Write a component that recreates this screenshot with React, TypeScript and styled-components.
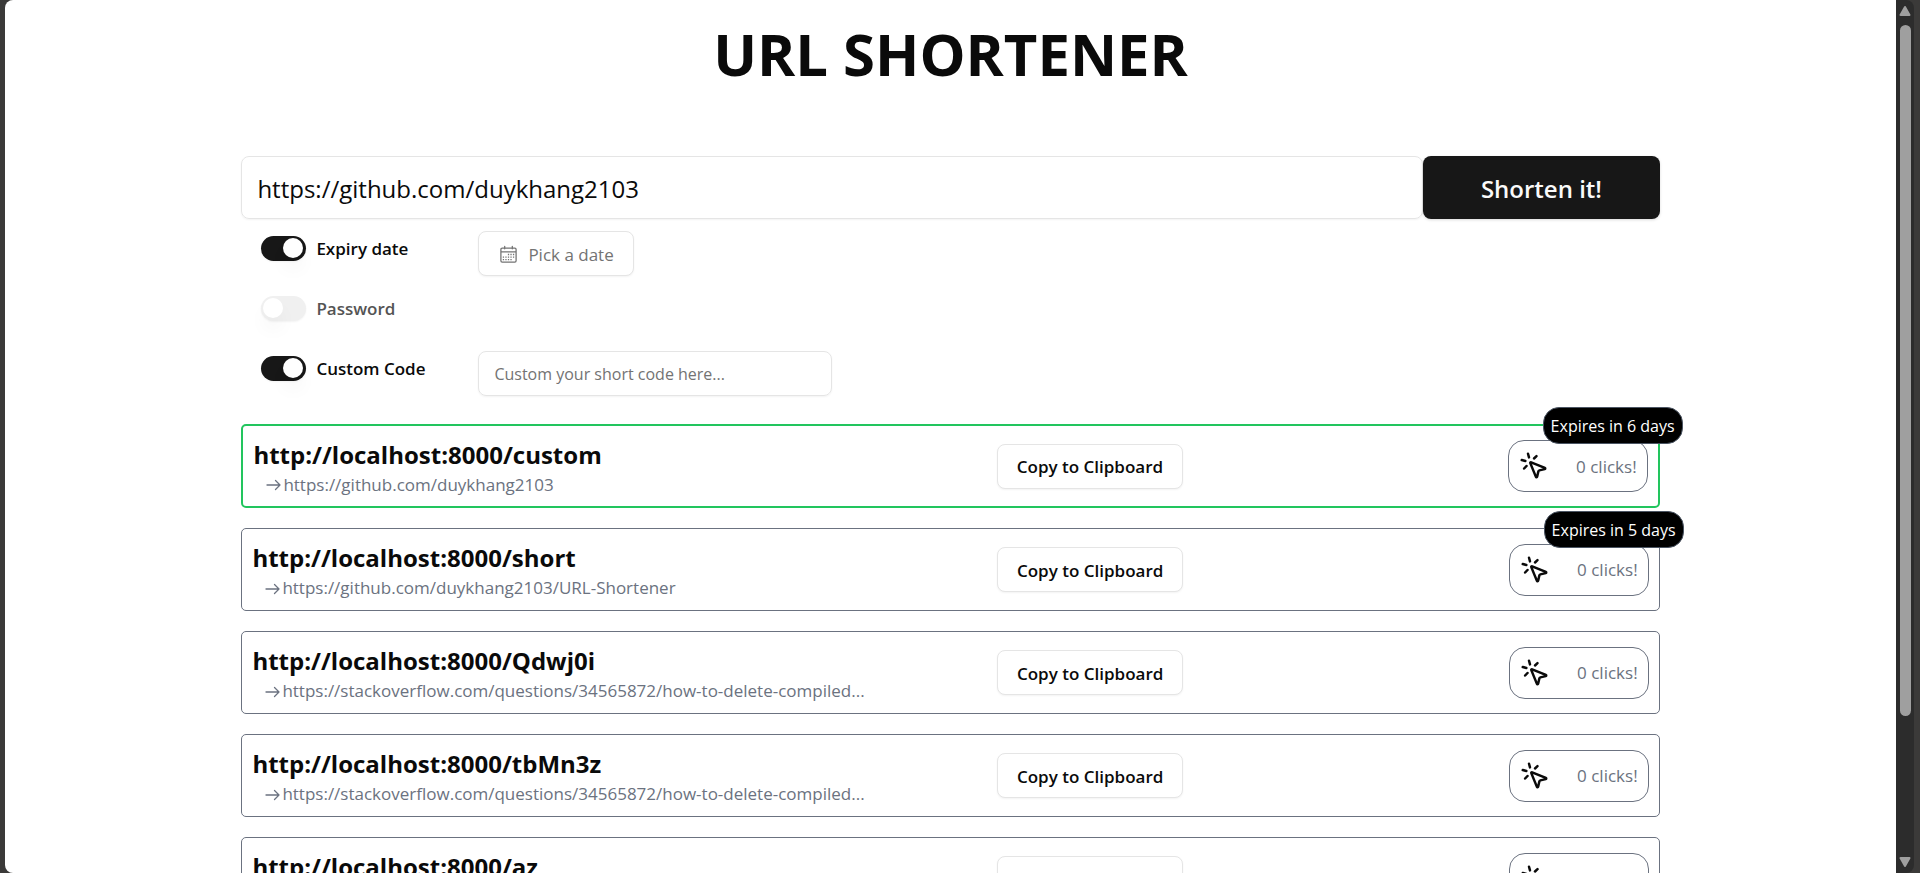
import React, { useState } from "react";
import styled, { createGlobalStyle } from "styled-components";
import { MousePointerClick } from "lucide-react";

const GlobalStyle = createGlobalStyle`
  *, *::before, *::after { box-sizing: border-box; }
  body {
    margin: 0;
    background: #3b3a39;
    color: #0a0a0a;
    font-family: "Open Sans", "Noto Sans", sans-serif;
    font-size: 17px;
    line-height: 25px;
  }
  button, input { font: inherit; color: inherit; }
  h1, h2, p, ul { margin: 0; padding: 0; }
`;

const Frame = styled.div`
  display: flex;
  height: 100vh;
  padding: 0 6px 0 5px;
  overflow: hidden;
`;

const Page = styled.main`
  flex: 1;
  min-width: 0;
  overflow: hidden;
  background: #fff;
  border-radius: 8px 0 0 8px;
`;

const Content = styled.div`
  width: 75%;
  margin: 0 auto;
`;

const Title = styled.h1`
  padding: 18px 0 66px;
  font-size: 58px;
  line-height: 72px;
  font-weight: 700;
  text-align: center;
`;

const ShortenForm = styled.form`
  display: grid;
  grid-template-columns: 5fr 1fr;
`;

const TextField = styled.input`
  width: 100%;
  height: 45px;
  padding: 1px 15px 0;
  border: 1px solid #e5e5e5;
  border-radius: 8px;
  background: transparent;
  box-shadow: 0 1px 2px rgba(0, 0, 0, 0.05);
  font-size: 16px;
  outline: none;
  &::placeholder { color: #737373; opacity: 1; }
`;

const UrlField = styled(TextField)`
  height: 63px;
  font-size: 24px;
`;

const SubmitButton = styled.button`
  padding: 2px 0 0;
  border: 0;
  border-radius: 8px;
  background: #171717;
  color: #fafafa;
  font-size: 24px;
  font-weight: 600;
  box-shadow: 0 1px 3px rgba(0, 0, 0, 0.15);
  cursor: pointer;
`;

const Options = styled.div`
  padding: 12px 20px 13px;
`;

const OptionRow = styled.div`
  display: grid;
  grid-template-columns: 217px minmax(0, 354px);
  align-items: start;
  height: 60px;
`;

const OptionLabel = styled.label<{ $dimmed: boolean }>`
  display: flex;
  align-items: center;
  gap: 10px;
  padding-top: 5px;
  font-weight: 600;
  color: ${(p) => (p.$dimmed ? "#545454" : "#0a0a0a")};
`;

const Toggle = styled.input`
  appearance: none;
  flex: none;
  width: 45px;
  height: 25px;
  margin: 0;
  padding: 2px 3px 2px 2px;
  display: flex;
  border-radius: 13px;
  background: #f0f0f0;
  box-shadow: 0 1px 2px rgba(0, 0, 0, 0.05);
  cursor: pointer;
  &::before {
    content: "";
    width: 20px;
    height: 20px;
    border-radius: 50%;
    background: #fff;
    box-shadow: 0 12px 19px -4px rgba(0, 0, 0, 0.1);
  }
  &:checked {
    justify-content: flex-end;
    background: #171717;
  }
`;

const OutlineButton = styled.button<{ $muted?: boolean }>`
  display: inline-flex;
  align-items: center;
  justify-content: center;
  justify-self: start;
  gap: 10px;
  height: 45px;
  padding: 1px 19px 0 20px;
  border: 1px solid #e5e5e5;
  border-radius: 8px;
  background: #fff;
  color: ${(p) => (p.$muted ? "#737373" : "#0a0a0a")};
  font-weight: ${(p) => (p.$muted ? 400 : 600)};
  box-shadow: 0 1px 2px rgba(0, 0, 0, 0.05);
  white-space: nowrap;
  cursor: pointer;
`;

const CopyButton = styled(OutlineButton)`
  justify-self: stretch;
  padding: 1px 0 0;
`;

const LinkList = styled.ul`
  display: flex;
  flex-direction: column;
  gap: 20px;
  list-style: none;
`;

const Card = styled.li<{ $fresh: boolean }>`
  display: grid;
  grid-template-columns: minmax(0, 8fr) 186px minmax(0, 5fr);
  align-items: center;
  height: ${(p) => (p.$fresh ? 84 : 83)}px;
  padding: 0 10px;
  border: ${(p) => (p.$fresh ? "2px solid #22c55e" : "1px solid #6b7280")};
  border-radius: 5px;
`;

const ShortUrl = styled.h2`
  padding-top: 2px;
  font-size: 24px;
  line-height: 34px;
  font-weight: 700;
`;

const LongUrl = styled.p`
  display: flex;
  align-items: center;
  gap: 2px;
  padding-left: 13px;
  color: #6b7280;
  svg { flex: none; }
`;

const PlainLink = styled.a`
  overflow: hidden;
  white-space: nowrap;
  text-overflow: ellipsis;
  color: inherit;
  text-decoration: none;
`;

const Clicks = styled.div`
  display: flex;
  align-items: center;
  justify-content: space-between;
  justify-self: end;
  position: relative;
  width: 140px;
  height: 52px;
  padding: 0 10px;
  border: 1px solid #6b7280;
  border-radius: 16px;
  color: #6b7280;
  svg { color: #0a0a0a; }
`;

const Expiry = styled.span`
  position: absolute;
  top: -34px;
  right: -36px;
  width: 140px;
  padding: 6px 0 4px;
  border: 1px solid #4b5563;
  border-radius: 16px;
  background: #000;
  color: #fff;
  font-size: 16px;
  text-align: center;
  white-space: nowrap;
`;

const ScrollTrack = styled.div`
  display: flex;
  flex-direction: column;
  align-items: center;
  width: 18px;
  padding: 6px 0;
  background: #2c2c2c;
  border-radius: 0 8px 8px 0;
`;

const ScrollArea = styled.div`
  flex: 1;
  padding: 9px 0;
`;

const ScrollThumb = styled.div`
  width: 11px;
  height: 84%;
  border-radius: 6px;
  background: #9f9f9f;
`;

const CalendarIcon = () => (
  <svg width="19" height="19" viewBox="0 0 15 15" fill="none" aria-hidden="true">
    <path
      d="M4.5 1v2M10.5 1v2M1.5 5.5h12M2.5 2.5h10a1 1 0 0 1 1 1v9a1 1 0 0 1-1 1h-10a1 1 0 0 1-1-1v-9a1 1 0 0 1 1-1z"
      stroke="currentColor"
      strokeLinecap="round"
    />
    <path
      d="M7 7.5h1M9 7.5h1M11 7.5h1M3 9.5h1M5 9.5h1M7 9.5h1M9 9.5h1M11 9.5h1M3 11.5h1M5 11.5h1M7 11.5h1M9 11.5h1"
      stroke="currentColor"
    />
  </svg>
);

const ArrowIcon = () => (
  <svg width="15" height="16" viewBox="0 0 15 16" fill="none" aria-hidden="true">
    <path
      d="M1 9h13M9.5 4.5L14 9l-4.5 4.5"
      stroke="currentColor"
      strokeWidth="1.3"
      strokeLinecap="round"
      strokeLinejoin="round"
    />
  </svg>
);

const ScrollArrow = ({ down }: { down?: boolean }) => (
  <svg width="12" height="10" viewBox="0 0 12 10" aria-hidden="true">
    <path
      d={down ? "M1.5 1h9L6 9z" : "M1.5 9h9L6 1z"}
      fill="#9f9f9f"
      stroke="#9f9f9f"
      strokeWidth="2"
      strokeLinejoin="round"
    />
  </svg>
);

interface ShortLink {
  code: string;
  target: string;
  label?: string;
  expires?: string;
}

const compiled = "https://stackoverflow.com/questions/34565872/how-to-delete-compiled";

const links: ShortLink[] = [
  { code: "custom", target: "https://github.com/duykhang2103", expires: "Expires in 6 days" },
  { code: "short", target: "https://github.com/duykhang2103/URL-Shortener", expires: "Expires in 5 days" },
  { code: "Qdwj0i", target: compiled, label: compiled + "..." },
  { code: "tbMn3z", target: compiled, label: compiled + "..." },
  { code: "az", target: "https://github.com/duykhang2103" },
];

const LinkCard = ({ link, fresh }: { link: ShortLink; fresh: boolean }) => {
  const short = `http://localhost:8000/${link.code}`;
  return (
    <Card $fresh={fresh}>
      <div>
        <ShortUrl>
          <PlainLink href={short}>{short}</PlainLink>
        </ShortUrl>
        <LongUrl>
          <ArrowIcon />
          <PlainLink href={link.target}>{link.label ?? link.target}</PlainLink>
        </LongUrl>
      </div>
      <CopyButton type="button">Copy to Clipboard</CopyButton>
      <Clicks>
        <MousePointerClick size={30} aria-hidden="true" />
        0 clicks!
        {link.expires && <Expiry>{link.expires}</Expiry>}
      </Clicks>
    </Card>
  );
};

export default function App() {
  const [url, setUrl] = useState("https://github.com/duykhang2103");
  const [code, setCode] = useState("");
  const [expiry, setExpiry] = useState(true);
  const [password, setPassword] = useState(false);
  const [custom, setCustom] = useState(true);

  return (
    <>
      <GlobalStyle />
      <Frame>
        <Page>
          <Content>
            <Title>URL SHORTENER</Title>
            <ShortenForm onSubmit={(e) => e.preventDefault()}>
              <UrlField aria-label="URL to shorten" value={url} onChange={(e) => setUrl(e.target.value)} />
              <SubmitButton type="submit">Shorten it!</SubmitButton>
            </ShortenForm>
            <Options>
              <OptionRow>
                <OptionLabel $dimmed={!expiry}>
                  <Toggle type="checkbox" role="switch" checked={expiry} onChange={() => setExpiry(!expiry)} />
                  Expiry date
                </OptionLabel>
                {expiry && (
                  <OutlineButton type="button" $muted>
                    <CalendarIcon />
                    Pick a date
                  </OutlineButton>
                )}
              </OptionRow>
              <OptionRow>
                <OptionLabel $dimmed={!password}>
                  <Toggle type="checkbox" role="switch" checked={password} onChange={() => setPassword(!password)} />
                  Password
                </OptionLabel>
                {password && <TextField type="password" aria-label="Link password" />}
              </OptionRow>
              <OptionRow>
                <OptionLabel $dimmed={!custom}>
                  <Toggle type="checkbox" role="switch" checked={custom} onChange={() => setCustom(!custom)} />
                  Custom Code
                </OptionLabel>
                {custom && (
                  <TextField
                    aria-label="Short code"
                    placeholder="Custom your short code here..."
                    value={code}
                    onChange={(e) => setCode(e.target.value)}
                  />
                )}
              </OptionRow>
            </Options>
            <LinkList>
              {links.map((link, i) => (
                <LinkCard key={link.code} link={link} fresh={i === 0} />
              ))}
            </LinkList>
          </Content>
        </Page>
        <ScrollTrack aria-hidden="true">
          <ScrollArrow />
          <ScrollArea>
            <ScrollThumb />
          </ScrollArea>
          <ScrollArrow down />
        </ScrollTrack>
      </Frame>
    </>
  );
}
